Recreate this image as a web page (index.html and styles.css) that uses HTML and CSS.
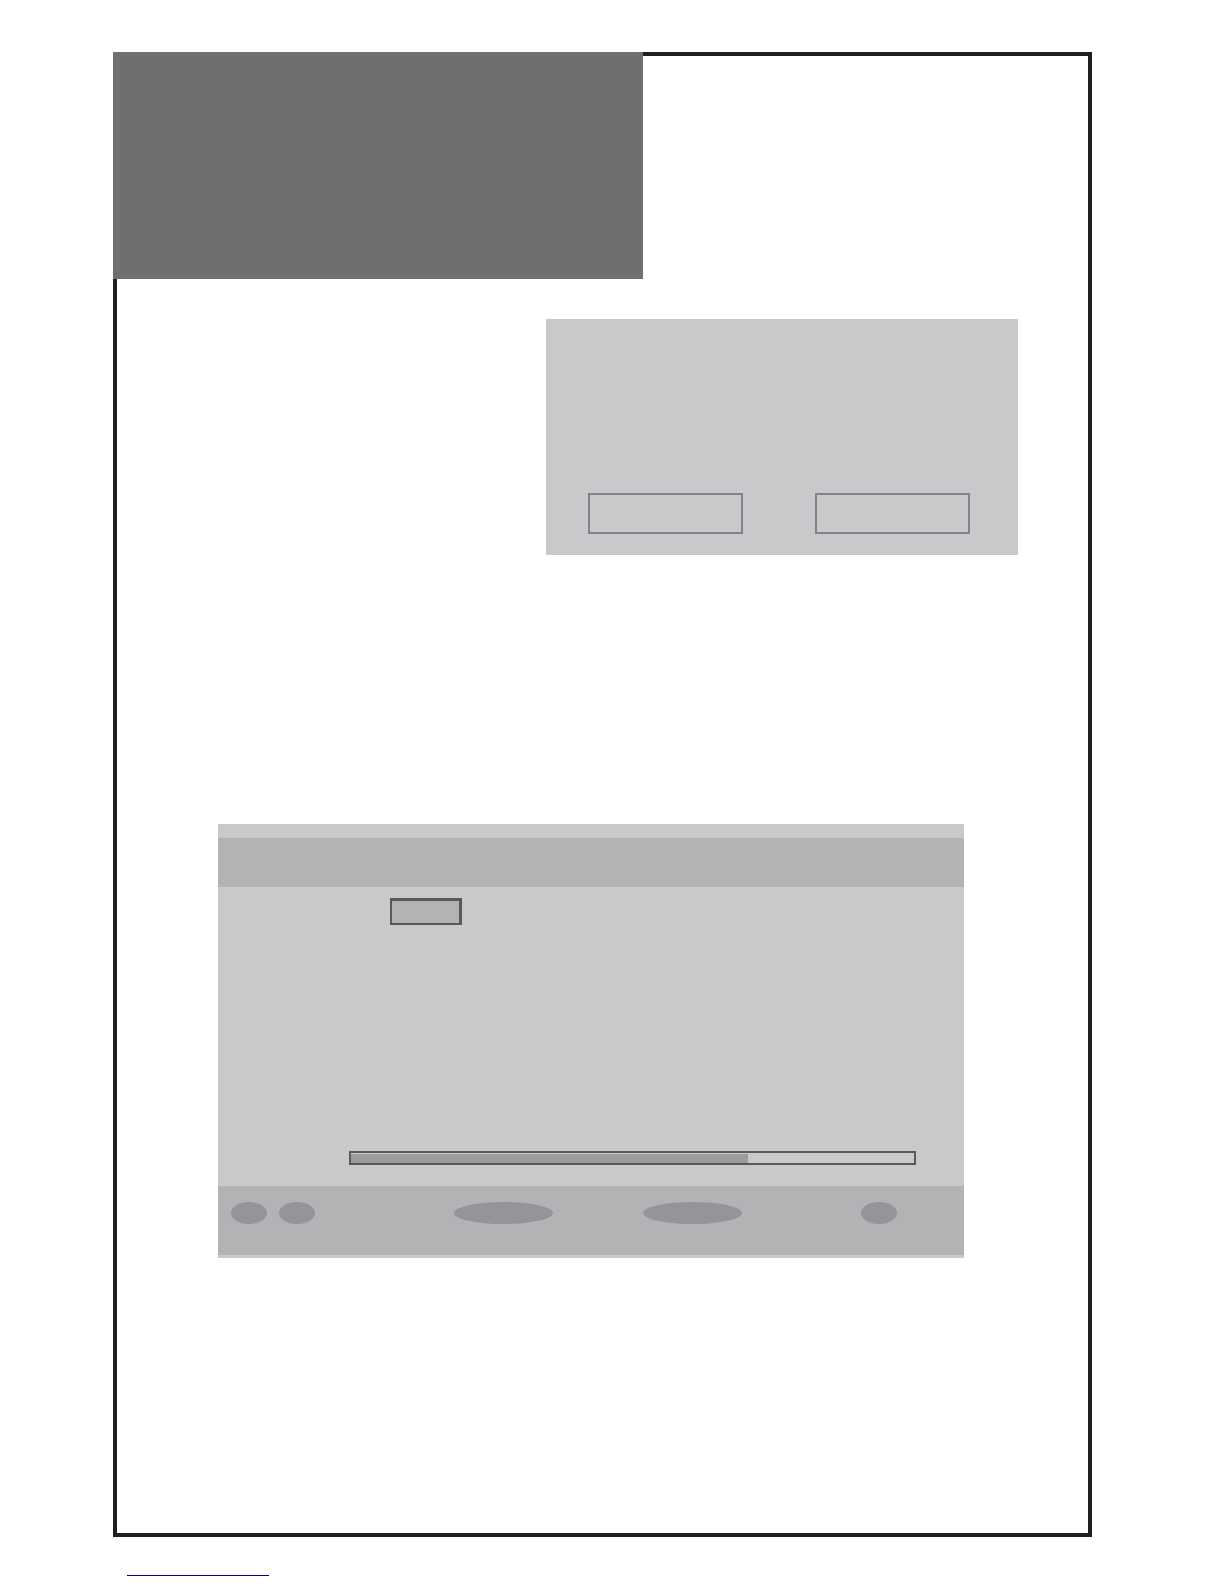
FILE: index.html
```html
<!DOCTYPE html>
<html lang="en">
<head>
    <meta charset="UTF-8">
    <meta name="viewport" content="width=device-width, initial-scale=1.0">
    <link rel="stylesheet" href="styles.css">
</head>
<body>
    <main class="sheet">
        <header class="banner"></header>

        <section class="dialog">
            <button class="dialog-button" type="button" aria-label="Confirm"></button>
            <button class="dialog-button" type="button" aria-label="Cancel"></button>
        </section>

        <section class="screen">
            <div class="screen-title"></div>
            <div class="screen-body">
                <input class="field" type="text" aria-label="Channel">
                <progress class="level" value="70.5" max="100" aria-label="Signal level"></progress>
            </div>
            <div class="screen-keys">
                <div class="key-pair">
                    <button class="key" type="button" aria-label="Previous"></button>
                    <button class="key" type="button" aria-label="Next"></button>
                </div>
                <button class="key key-wide" type="button" aria-label="Select"></button>
                <button class="key key-wide" type="button" aria-label="Menu"></button>
                <button class="key" type="button" aria-label="Exit"></button>
            </div>
        </section>
    </main>

    <footer class="page-footer">
        <a class="footer-link" href="#" aria-label="Home"></a>
    </footer>
</body>
</html>
```
FILE: styles.css
```css
* {
    margin: 0;
    padding: 0;
    box-sizing: border-box;
}

body {
    background: #fff;
    font-family: "Liberation Sans", sans-serif;
    padding: 52px 132px 8px 113px;
}

.sheet {
    display: flex;
    flex-direction: column;
    border: 4px solid #1f1f1f;
    padding-bottom: 275px;
}

/* covers the corner of the sheet border */
.banner {
    width: 530px;
    max-width: 100%;
    height: 227px;
    margin: -4px 0 0 -4px;
    background: #6e6f71;
}

.dialog {
    display: flex;
    justify-content: space-between;
    align-items: flex-end;
    align-self: flex-end;
    width: 472px;
    max-width: 100%;
    height: 236px;
    margin: 40px 70px 0 0;
    padding: 0 48px 21px 42px;
    background: #c8c9ca;
}

.dialog-button {
    width: 155px;
    height: 41px;
    border: 2px solid #828386;
    background: none;
    cursor: pointer;
}

.screen {
    margin: 269px 124px 0 101px;
    padding: 14px 0 3px;
    background: #c8c9ca;
}

.screen-title {
    height: 49px;
    background: #b2b3b5;
}

.screen-body {
    display: flex;
    flex-direction: column;
    justify-content: space-between;
    height: 299px;
    padding: 11px 48px 21px 131px;
}

.field {
    width: 72px;
    height: 27px;
    margin-left: 41px;
    border: 2px solid #58595b;
    border-top-width: 3px;
    border-right-width: 3px;
    background: #b2b3b5;
}

.level {
    display: block;
    width: 100%;
    height: 14px;
    border: 2px solid #58595b;
    padding-top: 1px;
    background: #c8c9ca;
    appearance: none;
}

.level::-webkit-progress-bar {
    background: #c8c9ca;
}

.level::-webkit-progress-value {
    background: #9b9c9e;
}

.screen-keys {
    display: grid;
    grid-template-columns: 223fr 189fr 218fr 36px;
    height: 69px;
    padding: 16px 67px 0 13px;
    background: #b2b3b5;
}

.key-pair {
    display: flex;
    gap: 12px;
}

.key {
    width: 36px;
    height: 22px;
    border: none;
    border-radius: 50%;
    background: #949598;
    cursor: pointer;
}

.key-wide {
    width: 99px;
}

.page-footer {
    padding: 22px 14px 0;
}

.footer-link {
    display: block;
    width: 142px;
    height: 17px;
    border-bottom: 1px solid #000099;
}
```
